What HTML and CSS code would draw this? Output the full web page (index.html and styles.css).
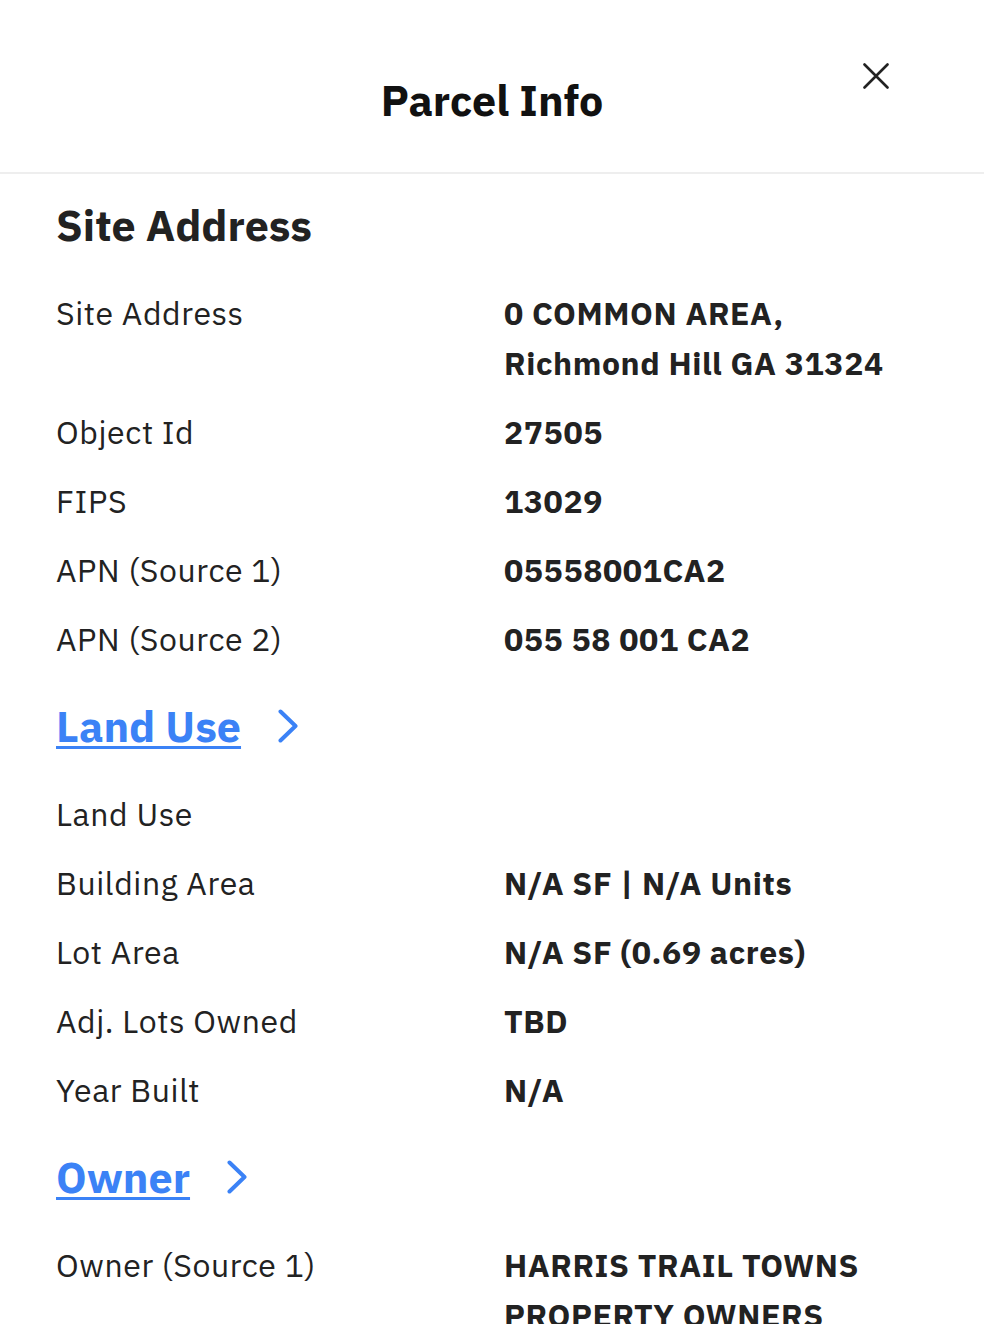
FILE: index.html
```html
<!DOCTYPE html>
<html lang="en">
<head>
<meta charset="utf-8">
<title>Parcel Info</title>
<link rel="stylesheet" href="styles.css">
</head>
<body>
<div class="panel">
  <header class="panel-header">
    <h1 class="panel-title">Parcel Info</h1>
    <button class="close-btn" aria-label="Close">
      <svg width="26" height="26" viewBox="0 0 26 26"><path d="M1.5 1.5 L24.5 24.5 M24.5 1.5 L1.5 24.5" stroke="#222" stroke-width="2.6" stroke-linecap="round" fill="none"/></svg>
    </button>
  </header>
  <main class="panel-body">
    <section class="section">
      <h2 class="section-title">Site Address</h2>
      <dl class="rows">
        <dt>Site Address</dt><dd>0 COMMON AREA,<br>Richmond Hill GA 31324</dd>
        <dt>Object Id</dt><dd>27505</dd>
        <dt>FIPS</dt><dd>13029</dd>
        <dt>APN (Source 1)</dt><dd>05558001CA2</dd>
        <dt>APN (Source 2)</dt><dd>055 58 001 CA2</dd>
      </dl>
    </section>
    <section class="section">
      <h2 class="section-title"><a class="section-link" href="#">Land Use</a><svg class="chevron" width="20" height="34" viewBox="0 0 20 34"><path d="M2.5 2.5 L17.5 17 L2.5 31.5" stroke="#3b82f6" stroke-width="4" stroke-linecap="round" stroke-linejoin="round" fill="none"/></svg></h2>
      <dl class="rows">
        <dt>Land Use</dt><dd></dd>
        <dt>Building Area</dt><dd>N/A SF | N/A Units</dd>
        <dt>Lot Area</dt><dd>N/A SF (0.69 acres)</dd>
        <dt>Adj. Lots Owned</dt><dd>TBD</dd>
        <dt>Year Built</dt><dd>N/A</dd>
      </dl>
    </section>
    <section class="section">
      <h2 class="section-title"><a class="section-link" href="#">Owner</a><svg class="chevron" width="20" height="34" viewBox="0 0 20 34"><path d="M2.5 2.5 L17.5 17 L2.5 31.5" stroke="#3b82f6" stroke-width="4" stroke-linecap="round" stroke-linejoin="round" fill="none"/></svg></h2>
      <dl class="rows">
        <dt>Owner (Source 1)</dt><dd>HARRIS TRAIL TOWNS PROPERTY OWNERS</dd>
      </dl>
    </section>
  </main>
</div>
</body>
</html>
```
FILE: styles.css
```css
* { box-sizing: border-box; }
html, body {
  margin: 0;
  padding: 0;
  background: #fff;
}
body {
  font-family: "IBM Plex Sans", "Noto Sans", "Open Sans", sans-serif;
  color: #222;
  overflow: hidden;
}
.panel {
  width: 984px;
  height: 1324px;
  overflow: hidden;
}
.panel-header {
  position: relative;
  height: 174px;
  border-bottom: 2px solid #eeeeee;
  padding-top: 72px;
}
.panel-title {
  margin: 0;
  text-align: center;
  font-size: 43px;
  line-height: 56px;
  font-weight: 700;
  color: #111;
}
.close-btn {
  position: absolute;
  top: 63px;
  right: 95px;
  width: 26px;
  height: 26px;
  padding: 0;
  border: 0;
  background: none;
  display: block;
}
.close-btn svg { display: block; }
.panel-body {
  padding: 23px 56px 0 56px;
}
.section + .section {
  margin-top: 34px;
}
.section-title {
  margin: 0;
  font-size: 43px;
  line-height: 56px;
  font-weight: 700;
  color: #222;
  display: flex;
  align-items: center;
}
.section-link {
  color: #3b82f6;
  text-decoration: underline;
  text-decoration-thickness: 3px;
  text-underline-offset: 4px;
}
.chevron {
  margin-left: 37px;
  display: block;
}
.rows {
  margin: 35px 0 0 0;
  display: grid;
  grid-template-columns: 448px 1fr;
  row-gap: 19px;
  font-size: 32px;
  letter-spacing: 0.6px;
  line-height: 50px;
}
.rows dt {
  margin: 0;
  font-weight: 400;
}
.rows dd {
  margin: 0;
  font-weight: 700;
  min-height: 50px;
}
```
